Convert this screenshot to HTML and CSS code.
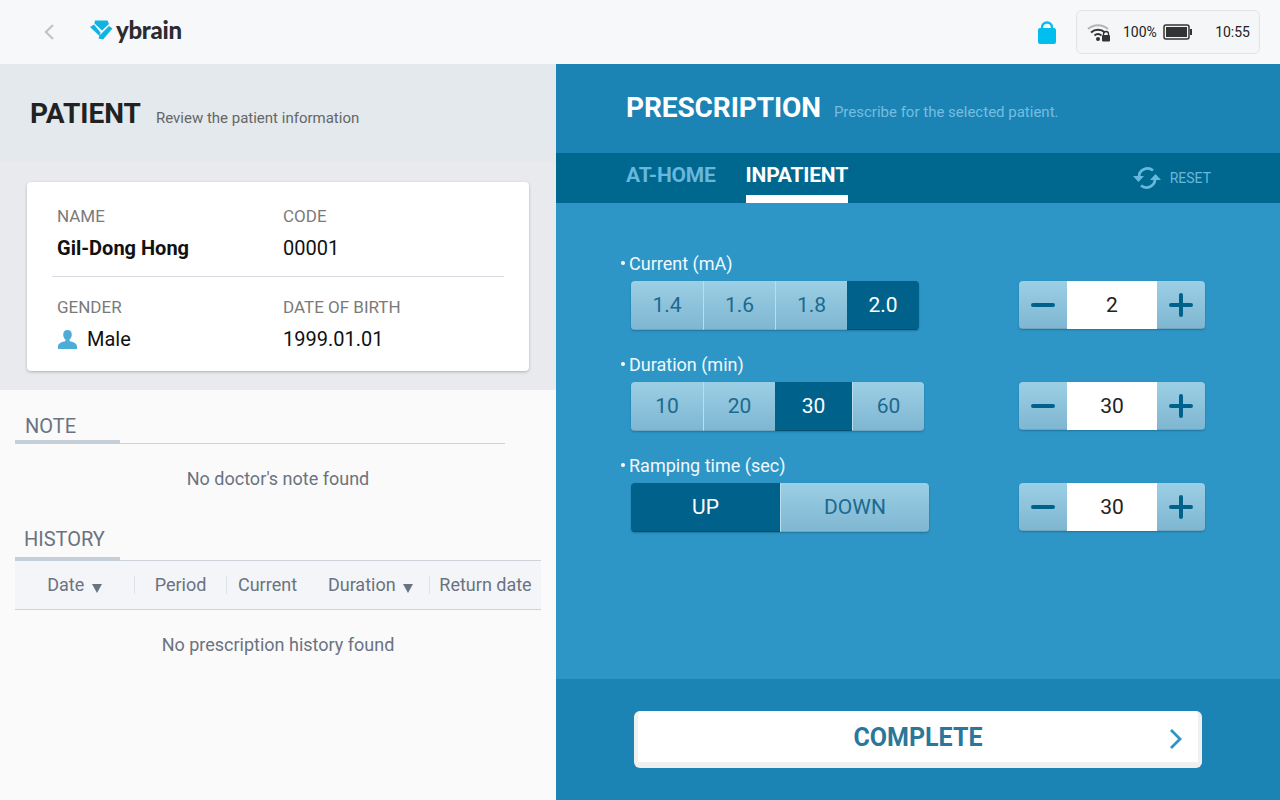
FILE: index.html
```html
<!DOCTYPE html>
<html lang="en">
<head>
    <meta charset="UTF-8">
    <title>ybrain - Prescription</title>
    <link rel="stylesheet" href="styles.css">
</head>
<body>
    <header class="topbar">
        <svg class="back" width="12" height="18" viewBox="0 0 12 18"><path d="M10 2L3 9l7 7" fill="none" stroke="#c3c6c9" stroke-width="2.4"/></svg>
        <div class="logo">
            <svg width="23" height="20" viewBox="0 0 23 20">
                <path d="M5 0.5h12.5l1.5 3.5-7 6.5-7.5-7z" fill="#12b3e0"/>
                <path d="M0 7l4-2.5 6.5 8-1 3.5z" fill="#12b3e0"/>
                <path d="M19 6l3.5 2.5-9.5 11-4.500-1 1-3z" fill="#12b3e0"/>
            </svg>
            <span class="logo-text">ybrain</span>
        </div>
        <svg class="lock" width="20" height="26" viewBox="0 0 20 26">
            <path d="M5 10V7.500a5 5 0 0 1 10 0V10" fill="none" stroke="#00bfee" stroke-width="2.400"/>
            <rect x="1" y="8" width="18" height="16" rx="2" fill="#00bfee"/>
        </svg>
        <div class="status">
            <svg width="24" height="20" viewBox="0 0 24 20">
                <path d="M1 7a15 15 0 0 1 20 0" fill="none" stroke="#b5b5b5" stroke-width="2"/>
                <path d="M4 10.500a10.500 10.500 0 0 1 14 0" fill="none" stroke="#333" stroke-width="2"/>
                <path d="M7.500 13.500a5.500 5.500 0 0 1 7 0" fill="none" stroke="#333" stroke-width="2"/>
                <circle cx="11" cy="17" r="2" fill="#333"/>
                <path d="M16.500 13v-1a2.500 2.500 0 0 1 5 0v1" fill="none" stroke="#333" stroke-width="1.300"/>
                <rect x="15" y="13" width="8" height="6.500" rx="1" fill="#333"/>
            </svg>
            <span class="status-pct">100%</span>
            <svg width="30" height="16" viewBox="0 0 30 16">
                <rect x="1" y="1" width="25" height="14" rx="2" fill="none" stroke="#333" stroke-width="1.500"/>
                <rect x="3" y="3" width="21" height="10" fill="#333"/>
                <rect x="27" y="5" width="2" height="6" fill="#333"/>
            </svg>
            <span class="status-time">10:55</span>
        </div>
    </header>

    <main class="main">
        <section class="left">
            <div class="left-head">
                <h1 class="title">PATIENT</h1>
                <span class="subtitle">Review the patient information</span>
            </div>
            <div class="card-wrap">
                <div class="card">
                    <div class="card-row">
                        <div class="cell">
                            <div class="cell-label">NAME</div>
                            <div class="cell-value bold">Gil-Dong Hong</div>
                        </div>
                        <div class="cell">
                            <div class="cell-label">CODE</div>
                            <div class="cell-value">00001</div>
                        </div>
                    </div>
                    <div class="card-row card-row-last">
                        <div class="cell">
                            <div class="cell-label">GENDER</div>
                            <div class="cell-value with-icon">
                                <svg width="21" height="21" viewBox="0 0 21 21"><path d="M10.500 1c2.800 0 4.300 2 4.300 4.700 0 2-1 3.800-2.200 4.800v1.500c3 1 7.400 2 7.400 5.500V20H1v-2.500c0-3.500 4.400-4.500 7.400-5.500v-1.500C7.200 9.500 6.200 7.700 6.200 5.700 6.200 3 7.700 1 10.500 1z" fill="#4eadd8"/></svg>
                                Male
                            </div>
                        </div>
                        <div class="cell">
                            <div class="cell-label">DATE OF BIRTH</div>
                            <div class="cell-value">1999.01.01</div>
                        </div>
                    </div>
                </div>
            </div>
            <div class="lower">
                <div class="section-head note-head"><span>NOTE</span></div>
                <p class="empty note-empty">No doctor's note found</p>
                <div class="section-head history-head"><span>HISTORY</span></div>
                <div class="table-head">
                    <div class="th">Date <i class="arrow"></i></div>
                    <div class="th sep">Period</div>
                    <div class="th sep">Current</div>
                    <div class="th">Duration <i class="arrow"></i></div>
                    <div class="th sep">Return date</div>
                </div>
                <p class="empty history-empty">No prescription history found</p>
            </div>
        </section>

        <section class="right">
            <div class="right-head">
                <h1 class="title">PRESCRIPTION</h1>
                <span class="subtitle">Prescribe for the selected patient.</span>
            </div>
            <nav class="tabs">
                <a class="tab">AT-HOME</a>
                <a class="tab active">INPATIENT</a>
                <div class="reset">
                    <svg width="30" height="26" viewBox="0 0 30 26">
                        <path d="M7 12a8.500 8.500 0 0 1 14-6.500" fill="none" stroke="#66b8dc" stroke-width="2.800"/>
                        <path d="M1 11h11l-5.500 6z" fill="#66b8dc"/>
                        <path d="M23 14a8.500 8.500 0 0 1-14 6.500" fill="none" stroke="#66b8dc" stroke-width="2.800"/>
                        <path d="M29 15H18l5.500-6z" fill="#66b8dc"/>
                    </svg>
                    <span>RESET</span>
                </div>
            </nav>
            <div class="form">
                <div class="field">
                    <label class="field-label">Current (mA)</label>
                    <div class="field-row">
                        <div class="seg">
                            <button class="seg-btn">1.4</button>
                            <button class="seg-btn">1.6</button>
                            <button class="seg-btn">1.8</button>
                            <button class="seg-btn on">2.0</button>
                        </div>
                        <div class="stepper">
                            <button class="step-btn"><i class="minus"></i></button>
                            <div class="step-val">2</div>
                            <button class="step-btn"><i class="minus"></i><i class="plus"></i></button>
                        </div>
                    </div>
                </div>
                <div class="field">
                    <label class="field-label">Duration (min)</label>
                    <div class="field-row">
                        <div class="seg">
                            <button class="seg-btn">10</button>
                            <button class="seg-btn">20</button>
                            <button class="seg-btn on wide">30</button>
                            <button class="seg-btn">60</button>
                        </div>
                        <div class="stepper">
                            <button class="step-btn"><i class="minus"></i></button>
                            <div class="step-val">30</div>
                            <button class="step-btn"><i class="minus"></i><i class="plus"></i></button>
                        </div>
                    </div>
                </div>
                <div class="field">
                    <label class="field-label">Ramping time (sec)</label>
                    <div class="field-row">
                        <div class="seg">
                            <button class="seg-btn on half">UP</button>
                            <button class="seg-btn half">DOWN</button>
                        </div>
                        <div class="stepper">
                            <button class="step-btn"><i class="minus"></i></button>
                            <div class="step-val">30</div>
                            <button class="step-btn"><i class="minus"></i><i class="plus"></i></button>
                        </div>
                    </div>
                </div>
            </div>
            <div class="foot">
                <button class="complete">
                    <span>COMPLETE</span>
                    <svg class="chevron" width="14" height="22" viewBox="0 0 14 22"><path d="M2 2l9 9-9 9" fill="none" stroke="#2d96c6" stroke-width="2.800"/></svg>
                </button>
            </div>
        </section>
    </main>
</body>
</html>
```

FILE: styles.css
```css
* {
    box-sizing: border-box;
}
html, body {
    margin: 0;
    height: 100%;
}
body {
    width: 1280px;
    height: 800px;
    overflow: hidden;
    font-family: Roboto, "Liberation Sans", sans-serif;
    display: flex;
    flex-direction: column;
}
button {
    font-family: inherit;
    border: none;
    padding: 0;
}

/* top bar */
.topbar {
    height: 64px;
    flex: none;
    background: #f7f8fa;
    display: flex;
    align-items: center;
    padding: 0 20px 0 43px;
}
.back {
    margin-right: 35px;
}
.logo {
    display: flex;
    align-items: center;
    gap: 3px;
    margin-top: -4px;
}
.logo-text {
    font-family: Lato, sans-serif;
    font-weight: 900;
    font-size: 24px;
    letter-spacing: -0.3px;
    color: #2a2c30;
    line-height: 24px;
}
.lock {
    margin-left: auto;
    margin-right: 19px;
    margin-top: 1px;
}
.status {
    width: 184px;
    height: 44px;
    background: #f5f6f8;
    border: 1px solid #e2e3e7;
    border-radius: 6px;
    display: flex;
    align-items: center;
    padding: 0 9px 0 10px;
    font-size: 14px;
    color: #222;
}
.status-pct {
    margin-left: 12px;
    margin-right: 6px;
}
.status-time {
    margin-left: auto;
}

.main {
    flex: 1;
    display: flex;
    min-height: 0;
}

/* left side */
.left {
    width: 556px;
    flex: none;
    background: #fafafa;
    display: flex;
    flex-direction: column;
}
.left-head {
    height: 98px;
    background: #e3e9ec;
    padding: 33px 0 0 30px;
    display: flex;
    align-items: baseline;
}
.title {
    margin: 0;
    font-size: 28px;
    font-weight: 700;
    line-height: 34px;
    color: #222;
}
.subtitle {
    font-size: 15px;
    color: #666;
    margin-left: 15px;
}
.card-wrap {
    height: 228px;
    background: #e9eaee;
    padding: 20px 27px 0;
}
.card {
    height: 189px;
    background: #fff;
    border-radius: 4px;
    box-shadow: 0 1px 3px rgba(0, 0, 0, 0.25);
    padding: 0 25px;
}
.card-row {
    height: 95px;
    display: grid;
    grid-template-columns: 226px 1fr;
    padding: 24px 0 0 5px;
    border-bottom: 1px solid #d8d9e2;
}
.card-row-last {
    border-bottom: none;
    height: 94px;
    padding-top: 20px;
}
.cell-label {
    font-size: 17px;
    line-height: 20px;
    color: #7a7a7a;
}
.cell-value {
    font-size: 20px;
    line-height: 24px;
    margin-top: 10px;
    color: #111;
}
.bold {
    font-weight: 700;
}
.with-icon {
    display: flex;
    align-items: center;
    gap: 9px;
}
.lower {
    flex: 1;
    padding: 0 15px;
    color: #6a7380;
}
.section-head {
    border-bottom: 1px solid #cdd2db;
    position: relative;
    font-size: 20px;
    line-height: 24px;
    padding-left: 10px;
}
.section-head::after {
    content: "";
    position: absolute;
    left: 0;
    bottom: -1px;
    width: 105px;
    height: 4px;
    background: #c6ced8;
}
.note-head {
    width: 490px;
    margin-top: 24px;
    padding-bottom: 5px;
}
.history-head {
    margin-top: 37px;
    padding-left: 9px;
    padding-bottom: 9px;
}
.empty {
    margin: 0;
    text-align: center;
    font-size: 18px;
    line-height: 22px;
}
.note-empty {
    margin-top: 24px;
}
.history-empty {
    margin-top: 24px;
}
.table-head {
    height: 49px;
    background: #f4f5f8;
    border-bottom: 1px solid #cdd2db;
    display: grid;
    grid-template-columns: 119px 92px 82px 121px 112px;
    align-items: center;
    font-size: 18px;
}
.th {
    text-align: center;
    height: 18px;
    line-height: 18px;
}
.sep {
    border-left: 1px solid #dfe2e8;
}
.th:nth-child(4) {
    padding-left: 4px;
}
.arrow {
    display: inline-block;
    width: 0;
    height: 0;
    margin-left: 3px;
    border-left: 5px solid transparent;
    border-right: 5px solid transparent;
    border-top: 9px solid #6a7380;
    vertical-align: -2px;
}

/* right side */
.right {
    flex: 1;
    background: #2d96c6;
    display: flex;
    flex-direction: column;
    color: #fff;
}
.right-head {
    height: 89px;
    background: #1c84b4;
    padding: 27px 0 0 70px;
    display: flex;
    align-items: baseline;
}
.right-head .title {
    color: #fff;
    letter-spacing: -0.1px;
}
.right-head .subtitle {
    color: #75bde0;
    margin-left: 13px;
}
.tabs {
    height: 50px;
    background: #00678f;
    display: flex;
    padding-left: 70px;
    padding-right: 69px;
    font-size: 21px;
    font-weight: 700;
    gap: 30px;
}
.tab {
    color: #66b8dc;
    line-height: 44px;
    height: 50px;
    letter-spacing: -0.2px;
}
.tab.active {
    color: #fff;
    border-bottom: 8px solid #fff;
}
.reset {
    margin-left: auto;
    display: flex;
    align-items: center;
    gap: 8px;
    font-size: 14px;
    font-weight: 400;
    color: #66b8dc;
}
.form {
    flex: 1;
    padding: 50px 0 0 65px;
}
.field {
    height: 101px;
}
.field-label {
    display: block;
    height: 28px;
    line-height: 22px;
    padding-left: 8px;
    font-size: 18px;
    color: #f2f8fb;
    position: relative;
}
.field-label::before {
    content: "";
    position: absolute;
    left: 0;
    top: 8px;
    width: 4px;
    height: 4px;
    border-radius: 50%;
    background: #fff;
}
.field-row {
    display: grid;
    grid-template-columns: 398px 186px;
}
.seg {
    margin-left: 10px;
    height: 49px;
    display: flex;
    align-self: start;
    justify-self: start;
    border-radius: 4px;
    overflow: hidden;
    box-shadow: 0 1px 2px rgba(0, 40, 70, 0.3);
}
.seg-btn {
    width: 72px;
    height: 49px;
    font-size: 21px;
    color: #1b6a90;
    background: linear-gradient(#9bcfe5, #7fb6d1);
    border-left: 1px solid #b8deef;
    border-bottom: 1px solid #6fa4bf;
}
.seg-btn:first-child {
    border-left: none;
}
.seg-btn.on {
    background: #00628a;
    color: #fff;
    border-left: none;
    border-bottom: 1px solid #00506f;
}
.seg-btn.wide {
    width: 77px;
}
.seg-btn.half {
    width: 149px;
}
.stepper {
    display: flex;
    height: 48px;
    border-radius: 4px;
    overflow: hidden;
    box-shadow: 0 1px 2px rgba(0, 40, 70, 0.3);
}
.step-btn {
    width: 48px;
    background: linear-gradient(#9bcfe5, #7fb6d1);
    border-bottom: 1px solid #6fa4bf;
    position: relative;
}
.step-val {
    width: 90px;
    background: #fff;
    color: #222;
    font-size: 21px;
    line-height: 48px;
    text-align: center;
}
.minus, .plus {
    position: absolute;
    background: #00628a;
    border-radius: 2px;
}
.minus {
    left: 12px;
    top: 22px;
    width: 24px;
    height: 4px;
}
.plus {
    left: 22px;
    top: 12px;
    width: 4px;
    height: 24px;
}

.foot {
    height: 121px;
    flex: none;
    background: #1c84b4;
    padding: 32px 78px 0;
}
.complete {
    width: 568px;
    height: 57px;
    background: #fff;
    border-radius: 6px;
    border: 4px solid #f0f0f0;
    border-top: none;
    border-right-width: 4px;
    border-bottom-width: 6px;
    color: #2c7699;
    font-size: 25px;
    font-weight: 700;
    position: relative;
    padding-top: 2px;
}
.chevron {
    position: absolute;
    right: 15px;
    top: 17px;
}
```
